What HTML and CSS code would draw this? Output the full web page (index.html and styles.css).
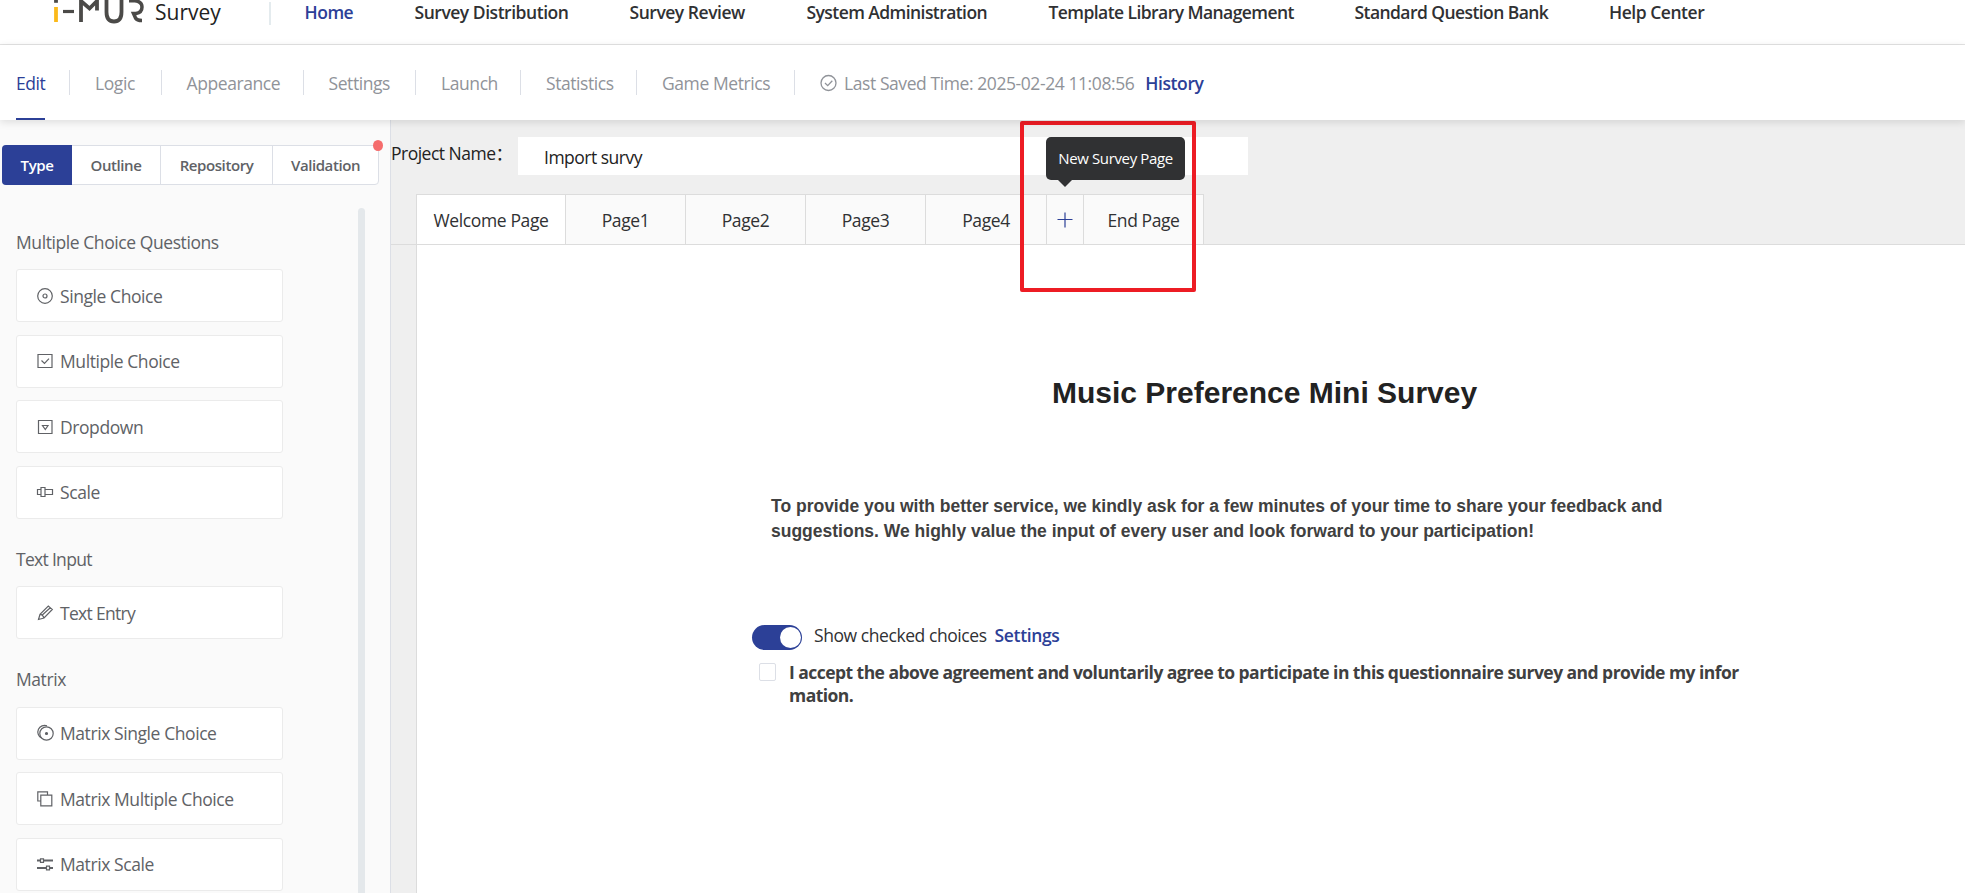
FILE: index.html
```
<!DOCTYPE html>
<html lang="en">
<head>
<meta charset="utf-8">
<title>i-MUR Survey</title>
<link rel="stylesheet" href="styles.css">
</head>
<body>
<header class="topbar">
  <div class="brand">
    <svg class="logo" width="92" height="24" viewBox="0 0 92 24" fill="none" stroke="#4b4a48" stroke-width="3.800">
      <path d="M3 0V2.800"/><path d="M3 7V22" stroke="#fbb91a"/><path d="M10 11.500H21" stroke-width="3.200"/>
      <path d="M28 22V1L36.500 8.500L44 1V10.500"/><path d="M53.500 0V12Q53.500 21.500 61 21.500T68.500 12V0"/><path d="M76 .8H82Q89 1.500 89 7T83 13.500H80.500L82.500 18Q84 20.500 89 20.500" stroke-width="3.500"/>
    </svg>
    <span class="brand-name">Survey</span>
  </div>
  <nav class="nav">
    <a class="active">Home</a><a>Survey Distribution</a><a>Survey Review</a><a class="long">System Administration</a><a class="long">Template Library Management</a><a class="long">Standard Question Bank</a><a>Help Center</a>
  </nav>
</header>
<div class="subnav">
  <a class="sub active">Edit</a><a class="sub">Logic</a><a class="sub">Appearance</a><a class="sub">Settings</a><a class="sub">Launch</a><a class="sub">Statistics</a><a class="sub">Game Metrics</a>
  <div class="saved">
    <svg width="18" height="18" viewBox="0 0 18 18" fill="none" stroke="#909399" stroke-width="1.300"><circle cx="8.500" cy="9" r="7.500"/><path d="M5 9L7.700 11.600L12.300 6.700"/></svg>
    <span>Last Saved Time: 2025-02-24 11:08:56</span>
    <a class="history">History</a>
  </div>
</div>
<div class="main">
  <aside class="side">
    <div class="seg">
      <span class="seg-item on">Type</span><span class="seg-item">Outline</span><span class="seg-item">Repository</span><span class="seg-item">Validation</span>
      <i class="dot"></i>
    </div>
    <div class="side-scroll">
      <div class="types">
        <section class="group">
          <h3>Multiple Choice Questions</h3>
          <div class="type"><svg class="ico" viewBox="0 0 18 18"><circle cx="9" cy="9" r="7.300"/><circle cx="9" cy="9" r="2"/></svg>Single Choice</div>
          <div class="type"><svg class="ico" viewBox="0 0 18 18"><path d="M2 2.500H16V15.500H2Z M5.500 8.500L8.500 11.500L13 6.700"/></svg>Multiple Choice</div>
          <div class="type"><svg class="ico" viewBox="0 0 18 18"><path d="M2.500 2.500H16V15.500H2.500Z M6.500 7.500H12L9.300 11.500Z"/></svg>Dropdown</div>
          <div class="type"><svg class="ico" viewBox="0 0 18 18"><path d="M5 6.500H1.500V11.500H5 M5 4.500H9V13.500H5Z M9 6.500H16.500V11.500H9"/></svg>Scale</div>
        </section>
        <section class="group">
          <h3 class="tight">Text Input</h3>
          <div class="type tight"><svg class="ico" viewBox="0 0 18 18"><path d="M2.500 15.500L4 10.300L12.300 2L16.300 5.500L8 14Z M4 10.300Q7 10.500 8 14 M6 11.300L14.300 3.700"/></svg>Text Entry</div>
        </section>
        <section class="group">
          <h3>Matrix</h3>
          <div class="type"><svg class="ico" viewBox="0 0 18 18"><circle cx="10.500" cy="9.500" r="6.700"/><circle cx="10.500" cy="9.500" r="1" fill="#606266"/><path d="M5.500 14A6.700 6.700 0 0 1 11 1.800"/></svg>Matrix Single Choice</div>
          <div class="type"><svg class="ico" viewBox="0 0 18 18"><path d="M4.800 5.200H15.800V15.800H4.800Z M4.800 11H1.800V1.800H11.500V5.200"/></svg>Matrix Multiple Choice</div>
          <div class="type"><svg class="ico thick" viewBox="0 0 18 18"><path d="M1 5.500H4.500M7.500 5.500H17M1 13H10.500M13.500 13H17"/><path class="thin" d="M4.500 3.800H7.500V7.300H4.500ZM10.500 11.200H13.500V14.800H10.500Z"/></svg>Matrix Scale</div>
        </section>
      </div>
      <div class="bar"></div>
    </div>
  </aside>
  <main class="work">
    <div class="project">
      <span class="project-label">Project Name：</span>
      <div class="project-input">Import survy</div>
    </div>
    <div class="tabs">
      <div class="tab on">Welcome Page</div><div class="tab">Page1</div><div class="tab">Page2</div><div class="tab">Page3</div><div class="tab last">Page4</div>
      <div class="tab plus"><svg width="16" height="16" viewBox="0 0 16 16"><path d="M8 .5V15.500M.5 7.500H15.500" stroke="#2c4097" stroke-width="1.200"/></svg>
        <div class="tip">New Survey Page</div>
      </div><div class="tab">End Page</div>
      <div class="mark"></div>
    </div>
    <div class="sheet">
      <h1>Music Preference Mini Survey</h1>
      <p class="intro">To provide you with better service, we kindly ask for a few minutes of your time to share your feedback and<br>suggestions. We highly value the input of every user and look forward to your participation!</p>
      <div class="switch-row"><span class="switch"><i></i></span><span>Show checked choices</span><a class="set">Settings</a></div>
      <div class="agree"><span class="box"></span><p>I accept the above agreement and voluntarily agree to participate in this questionnaire survey and provide my infor<br>mation.</p></div>
    </div>
  </main>
</div>
</body>
</html>
```

FILE: styles.css
```
* { box-sizing: border-box; }
body {
  margin: 0;
  height: 893px;
  overflow: hidden;
  display: flex;
  flex-direction: column;
  background: #fff;
  color: #303133;
  font: 17.5px/24px "Open Sans", "Noto Sans CJK SC", sans-serif;
  letter-spacing: -.42px;
}
h1, h3, p { margin: 0; }
.topbar { display: flex; height: 45px; border-bottom: 1px solid #e4e4e4; }
.brand { display: flex; width: 271px; height: 25px; padding-left: 53px; }
.brand::after { content: ""; width: 2px; height: 23px; margin: 2px 0 0 auto; background: #e4ebee; }
.brand-name { margin-left: 10px; font-size: 21px; line-height: 24px; letter-spacing: 0; color: #222; }
.nav { display: grid; grid-template-columns: 48px 153px 115px 180px 244px 192.5px 95px; gap: 62px; margin-left: 33.5px; font-weight: 600; letter-spacing: -.47px; white-space: nowrap; }
.nav .long { letter-spacing: -.57px; }
.nav .active, .history, .set { color: #2c4097; }
.subnav { display: grid; grid-template-columns: 29px 41.5px 92px 62.5px 55px 66px 108px auto; gap: 50px; position: relative; z-index: 2; flex: none; height: 75px; padding-left: 16px; background: #fff; color: #909399; box-shadow: 0 2px 8px rgba(0, 0, 0, .12); white-space: nowrap; }
.sub { height: 75px; padding-top: 26px; position: relative; }
.sub::after { content: ""; position: absolute; right: -25px; top: 25px; width: 1px; height: 25px; background: #dcdfe6; }
.sub.active { color: #2c4097; border-bottom: 2px solid #2c4097; }
.saved { display: flex; padding-top: 26px; }
.saved svg { margin: 3px 6px 0 0; }
.history { margin-left: 11px; font-weight: 600; }
.main { display: flex; flex: 1; min-height: 0; }
.side { width: 391px; padding-top: 25px; background: #fafafa; border-right: 1px solid #dcdfe6; color: #606266; overflow: hidden; }
.seg { display: flex; position: relative; width: 377px; height: 40px; margin-left: 2px; border: 1px solid #dcdfe6; border-radius: 4px; background: #fff; font-size: 15px; font-weight: 600; }
.seg-item { display: flex; align-items: center; justify-content: center; width: 112px; border-right: 1px solid #dcdfe6; }
.seg-item:nth-child(2) { width: 89px; }
.seg-item:nth-child(4) { width: 105px; border: 0; }
.seg-item.on { width: 70px; margin: -1px 0 -1px -1px; background: #2c4097; color: #fff; border-radius: 4px 0 0 4px; border: 0; }
.dot { position: absolute; right: -5px; top: -6px; width: 10px; height: 11px; border-radius: 50%; background: #f56c6c; }
.side-scroll { display: flex; justify-content: space-between; margin-top: 23px; padding: 0 25px 0 16px; }
.types { width: 267px; padding-top: 21.7px; }
.bar { width: 7px; height: 700px; border-radius: 4px; background: #e4e8eb; }
.group { display: flex; flex-direction: column; gap: 12.5px; margin-bottom: 28px; }
.group h3 { font-weight: 400; font-size: 17.5px; height: 27px; line-height: 24px; }
.group .tight { letter-spacing: -.7px; }
.type { display: flex; align-items: center; height: 53px; padding-left: 19px; background: #fff; border: 1px solid #ebebeb; border-radius: 3px; }
.ico { width: 18px; height: 18px; margin-right: 6px; fill: none; stroke: #606266; stroke-width: 1.2; }
.thick { stroke-width: 2; }
.thin { stroke-width: 1.2; }
.work { display: flex; flex-direction: column; flex: 1; background: #efefef; }
.project { display: flex; height: 74px; padding-top: 17px; color: #222; letter-spacing: -.5px; }
.project-label { width: 127px; padding-top: 4px; white-space: nowrap; }
.project-input { width: 730px; height: 38px; padding: 8px 26px; background: #fff; }
.tabs { display: flex; position: relative; height: 51px; padding-left: 25px; border-bottom: 1px solid #dcdcdc; white-space: nowrap; }
.tab { display: flex; align-items: center; justify-content: center; width: 120px; padding-top: 1px; background: #fafafa; border: 1px solid #dcdcdc; border-width: 1px 1px 0 0; }
.tab.on { width: 150px; height: 51px; background: #fff; border-left-width: 1px; border-bottom: 1px solid #dcdcdc; letter-spacing: -.36px; }
.tab.last { width: 121px; }
.tab.plus { position: relative; width: 37px; }
.tip { position: absolute; left: -1px; top: -58px; width: 139px; height: 43px; padding: 9px 0; text-align: center; border-radius: 5px; background: #303133; color: #fff; font-size: 15px; letter-spacing: -.37px; }
.tip::after { content: ""; position: absolute; left: 12px; top: 43px; border: 7px solid transparent; border-top-color: #303133; border-bottom: 0; }
.mark { position: absolute; left: 629px; top: -73px; width: 176px; height: 171px; border: 4px solid #ed1c24; border-radius: 2px; }
.sheet { flex: 1; margin-left: 25px; border-left: 1px solid #dcdcdc; background: #fff; overflow: hidden; letter-spacing: -.43px; }
.sheet h1 { margin-top: 130px; padding-left: 635px; font: bold 30px/36px "Liberation Sans", sans-serif; letter-spacing: 0; color: #222; }
.intro { margin-top: 83px; padding-left: 354px; font: bold 17.5px/25px "Liberation Sans", sans-serif; letter-spacing: 0; color: #404040; }
.switch-row { display: flex; margin-top: 79px; padding-left: 335px; }
.switch { width: 50px; height: 25px; margin: 2px 12px 0 0; padding: 2px; border-radius: 13px; background: #2c4097; }
.switch i { display: block; width: 21px; height: 21px; margin-left: 26px; border-radius: 50%; background: #fff; }
.set { margin-left: 8px; font-weight: 600; letter-spacing: -.35px; }
.agree { display: flex; margin-top: 13px; padding-left: 342px; font-weight: 700; line-height: 23px; letter-spacing: -.54px; white-space: nowrap; color: #404040; }
.agree p { margin-top: -2px; }
.box { width: 17px; height: 18px; margin-right: 13px; border: 1px solid #dcdfe6; border-radius: 2px; }
```
